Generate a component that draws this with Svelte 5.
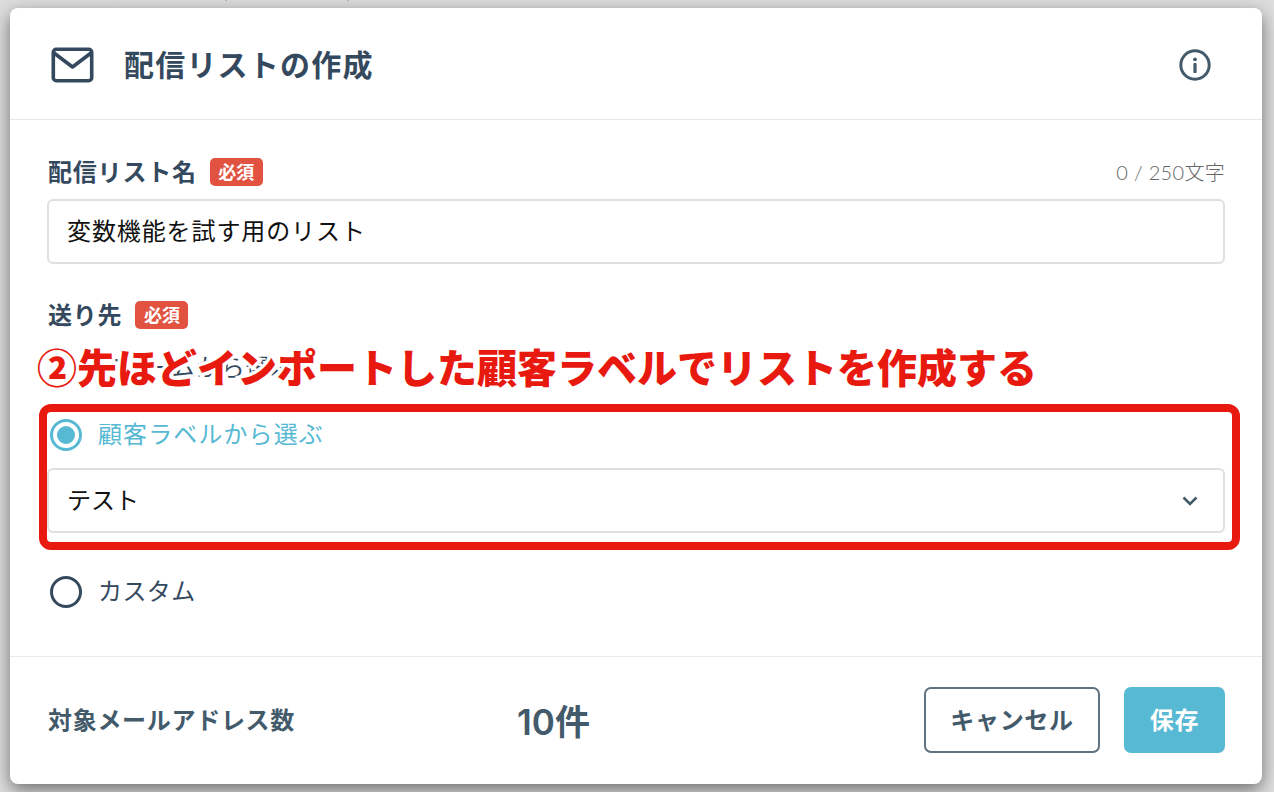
<script>
    let listName = '変数機能を試す用のリスト'
    let label = 'テスト'
</script>

<div class="page">
    <div class="behind">配信リスト一覧の宛先名称 (メールアドレス)</div>
    <div class="modal">
        <header class="head">
            <svg class="mail" width="44" height="36" viewBox="0 0 44 36" fill="none" stroke="#34495e" stroke-width="3.6" stroke-linejoin="round" stroke-linecap="round">
                <rect x="2.3" y="2.3" width="38.4" height="31.4" rx="3" />
                <path d="M3 6 L21.5 20 L40 6" />
            </svg>
            <h1>配信リストの作成</h1>
            <svg class="info" width="32" height="32" viewBox="0 0 32 32" fill="none">
                <circle cx="16" cy="16" r="14.2" stroke="#435a6b" stroke-width="3" />
                <circle cx="16" cy="10.3" r="1.9" fill="#435a6b" />
                <rect x="14.4" y="14" width="3.2" height="10" rx="1" fill="#435a6b" />
            </svg>
        </header>

        <section class="body">
            <div class="label-row">
                <span class="label">配信リスト名</span>
                <span class="req">必須</span>
                <span class="count">0 / 250文字</span>
            </div>
            <div class="field">{listName}</div>

            <div class="label-row second">
                <span class="label">送り先</span>
                <span class="req">必須</span>
            </div>
            <div class="hidden-label">フォームから選ぶ</div>

            <div class="radio-row on">
                <span class="radio"><span class="dot"></span></span>
                <span class="radio-text">顧客ラベルから選ぶ</span>
            </div>
            <div class="field select">
                {label}
                <svg width="16" height="10" viewBox="0 0 16 10" fill="none" stroke="#435a6b" stroke-width="2.6">
                    <path d="M1.5 1.5 L8 8 L14.5 1.5" />
                </svg>
            </div>
            <div class="radio-row custom">
                <span class="radio"></span>
                <span class="radio-text">カスタム</span>
            </div>
        </section>

        <footer class="foot">
            <span class="target">対象メールアドレス数</span>
            <span class="num">10件</span>
            <button class="cancel">キャンセル</button>
            <button class="save">保存</button>
        </footer>

        <!-- annotation drawn on top of the screenshot -->
        <div class="note">②先ほどインポートした顧客ラベルでリストを作成する</div>
        <div class="note-box"></div>
    </div>
</div>

<style>
    :global(body) {
        margin: 0;
        background: #dedede;
    }
    .page {
        position: relative;
        width: 1274px;
        height: 792px;
        padding: 8px 12px 8px 10px;
        box-sizing: border-box;
        overflow: hidden;
        font-family: "Noto Sans CJK JP", "Noto Sans", sans-serif;
    }
    .behind {
        position: absolute;
        top: -21px;
        left: 14px;
        font-size: 17px;
        line-height: 24px;
        white-space: nowrap;
        color: #a4a8ab;
    }
    .modal {
        position: relative;
        height: 776px;
        background: #fff;
        border-radius: 8px;
        box-shadow: 0 6px 18px rgba(0, 0, 0, .5);
        display: flex;
        flex-direction: column;
    }
    .head {
        flex: none;
        display: flex;
        align-items: center;
        padding: 2px 51px 0 41px;
        box-sizing: border-box;
        height: 112px;
        border-bottom: 1px solid #e8e8e8;
    }
    .mail {
        margin-right: 29px;
    }
    h1 {
        margin: 0;
        flex: 1;
        padding-bottom: 4px;
        font-size: 30px;
        font-weight: 700;
        letter-spacing: 1.2px;
        color: #34495e;
    }
    .body {
        flex: 1;
        padding: 0 37px 0 38px;
    }
    .label-row {
        display: flex;
        align-items: center;
        height: 30px;
        margin-top: 37px;
        margin-bottom: 12px;
    }
    .label-row.second {
        margin-top: 36px;
        margin-bottom: 0;
    }
    .label {
        padding-bottom: 3px;
        font-size: 24px;
        font-weight: 700;
        letter-spacing: .8px;
        color: #34495e;
    }
    .req {
        margin-left: 13px;
        width: 53px;
        height: 28px;
        line-height: 26px;
        text-align: center;
        border-radius: 5px;
        background: #e15241;
        color: #fff;
        font-size: 18px;
        font-weight: 700;
    }
    .count {
        margin-left: auto;
        padding-bottom: 2px;
        font-family: "Lato", "Noto Sans CJK JP", sans-serif;
        font-size: 20px;
        font-weight: 300;
        letter-spacing: .3px;
        color: #666;
    }
    .field {
        box-sizing: border-box;
        height: 65px;
        margin-left: -1px;
        display: flex;
        align-items: center;
        justify-content: space-between;
        padding: 0 25px 4px 18px;
        border: 2px solid #e0e0e0;
        border-radius: 6px;
        font-size: 24px;
        letter-spacing: .9px;
        color: #111;
    }
    .select {
        letter-spacing: 0;
    }
    .select svg {
        margin-top: 4px;
    }
    .hidden-label {
        height: 24px;
        margin-top: 24px;
        padding-left: 50px;
        line-height: 24px;
        font-size: 24px;
        letter-spacing: .7px;
        color: #34495e;
    }
    .radio-row {
        display: flex;
        align-items: center;
        height: 32px;
        font-size: 24px;
        letter-spacing: 1.1px;
        color: #34495e;
        margin-top: 41px;
        margin-bottom: 17px;
        padding-left: 2px;
    }
    .radio-text {
        padding-bottom: 5px;
    }
    .radio-row.on {
        color: #57b9d3;
    }
    .radio-row.custom {
        margin-top: 43px;
        margin-bottom: 0;
        letter-spacing: .4px;
    }
    .radio {
        box-sizing: border-box;
        width: 32px;
        height: 32px;
        margin-right: 16px;
        border: 3px solid #34495e;
        border-radius: 50%;
        display: flex;
        align-items: center;
        justify-content: center;
    }
    .on .radio {
        border-color: #57b9d3;
    }
    .dot {
        width: 18px;
        height: 18px;
        border-radius: 50%;
        background: #57b9d3;
    }
    .foot {
        height: 128px;
        flex: none;
        box-sizing: border-box;
        display: flex;
        align-items: center;
        padding: 0 37px 1px 38px;
        border-top: 1px solid #eaeaea;
    }
    .target {
        width: 469px;
        padding-bottom: 4px;
        font-size: 24px;
        font-weight: 700;
        letter-spacing: .7px;
        color: #435a6b;
    }
    .num {
        padding-bottom: 2px;
        font-family: "Inter", "Noto Sans CJK JP", sans-serif;
        font-size: 35px;
        font-weight: 600;
        color: #435a6b;
    }
    button {
        font-family: inherit;
        box-sizing: border-box;
        height: 66px;
        padding-bottom: 4px;
        border-radius: 7px;
        font-size: 24px;
        font-weight: 700;
        letter-spacing: .7px;
    }
    .cancel {
        width: 176px;
        margin-left: auto;
        background: #fff;
        border: 2px solid #607180;
        color: #435a6b;
    }
    .save {
        width: 101px;
        margin-left: 24px;
        background: #57b9d3;
        border: none;
        color: #fff;
    }
    .note {
        position: absolute;
        left: 27px;
        top: 334px;
        white-space: nowrap;
        font-size: 40px;
        line-height: 48px;
        font-weight: 900;
        color: #e8190f;
        -webkit-text-stroke: 7px #fff;
        paint-order: stroke fill;
    }
    .note-box {
        position: absolute;
        left: 29px;
        top: 396px;
        width: 1201px;
        height: 146px;
        box-sizing: border-box;
        border: 8px solid #e8190f;
        border-radius: 12px;
    }
</style>
